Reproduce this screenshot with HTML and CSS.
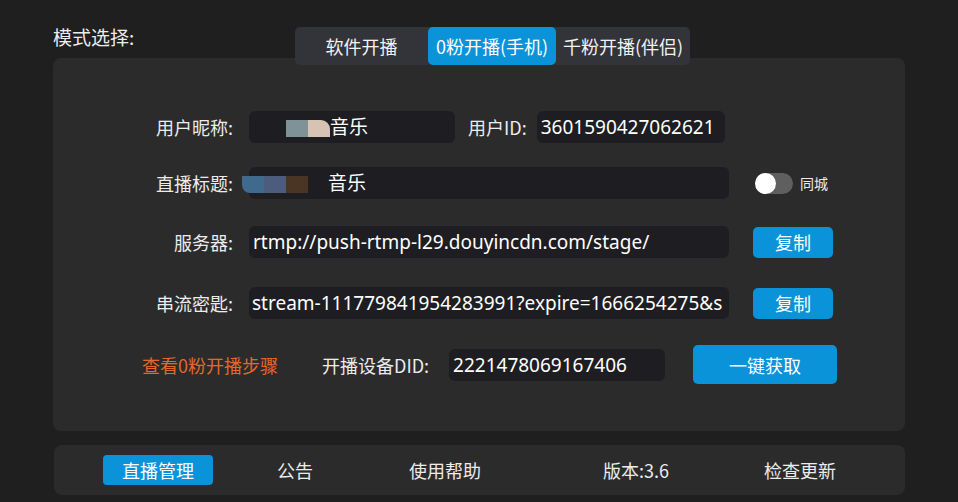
FILE: index.html
```html
<!DOCTYPE html>
<html lang="zh-CN">
<head>
  <meta charset="UTF-8" />
  <title>直播管理</title>
  <link rel="stylesheet" href="styles.css">
</head>
<body>

  <div class="header">
    <div class="header-title">模式选择:</div>
    <div class="mode-tabs">
      <div class="mode-tab tab-soft">软件开播</div>
      <div class="mode-tab tab-phone active">0粉开播(手机)</div>
      <div class="mode-tab tab-mate">千粉开播(伴侣)</div>
    </div>
  </div>

  <div class="panel">
    <div class="row row-nick">
      <div class="label">用户昵称:</div>
      <div class="field field-nick">
        <span class="blur-gap"></span><span class="blur" style="background:#7f9297"></span><span class="blur blur-round" style="background:#d8c2b4"></span>音乐
      </div>
      <div class="label label-id">用户ID:</div>
      <div class="field field-id">3601590427062621</div>
    </div>

    <div class="row row-title">
      <div class="label">直播标题:</div>
      <div class="field field-wide field-title">
        <span class="blur blur-left" style="background:#3f6a8e"></span><span class="blur" style="background:#4b5c7c"></span><span class="blur" style="background:#4a3524"></span><span class="blur-gap small"></span>音乐
      </div>
      <div class="switch"><span class="knob"></span></div>
      <div class="switch-label">同城</div>
    </div>

    <div class="row row-server">
      <div class="label">服务器:</div>
      <div class="field field-wide">rtmp://push-rtmp-l29.douyincdn.com/stage/</div>
      <button class="btn btn-copy">复制</button>
    </div>

    <div class="row row-key">
      <div class="label">串流密匙:</div>
      <div class="field field-wide field-key">stream-111779841954283991?expire=1666254275&amp;s</div>
      <button class="btn btn-copy">复制</button>
    </div>

    <div class="row row-device">
      <a class="steps-link">查看0粉开播步骤</a>
      <div class="device-label">开播设备DID:</div>
      <div class="field field-did">2221478069167406</div>
      <button class="btn btn-fetch">一键获取</button>
    </div>
  </div>

  <div class="nav">
    <div class="nav-item active">直播管理</div>
    <div class="nav-item">公告</div>
    <div class="nav-item">使用帮助</div>
    <div class="nav-item">版本:3.6</div>
    <div class="nav-item">检查更新</div>
  </div>

</body>
</html>
```

FILE: styles.css
```css
body {
  margin: 0;
  padding: 0;
  width: 958px;
  height: 502px;
  overflow: hidden;
  background: #1f1f1f;
  color: #ececec;
  font-family: "Noto Sans CJK SC", "Noto Sans", sans-serif;
  font-size: 18px;
}

.header {
  display: flex;
  height: 31px;
  padding: 27px 0 0 53px;
}

.header-title {
  width: 242px;
  font-size: 19px;
  line-height: 20px;
}

.mode-tabs {
  position: relative;
  z-index: 1;
  display: flex;
  height: 38px;
  background: #333439;
  border-radius: 5px;
}

.mode-tab {
  display: flex;
  align-items: center;
  justify-content: center;
  color: #f2f2f2;
  border-radius: 5px;
}

.tab-soft { width: 133px; }
.tab-phone { width: 128px; }
.tab-mate { width: 134px; }

.mode-tab.active {
  background: #0b93da;
  color: #fff;
}

.panel {
  box-sizing: border-box;
  width: 852px;
  height: 373px;
  margin: 0 0 0 53px;
  padding-top: 53px;
  background: #2b2b2b;
  border-radius: 8px;
}

.row {
  display: flex;
  align-items: center;
  height: 32px;
}

.row-title { margin-top: 24px; }
.row-server { margin-top: 27px; }
.row-key { margin-top: 29px; }

.label {
  width: 180px;
  text-align: right;
  white-space: nowrap;
}

.field {
  box-sizing: border-box;
  height: 32px;
  margin-left: 16px;
  padding-left: 4px;
  background: #1e1e22;
  border-radius: 6px;
  color: #fff;
  font-family: "Noto Sans", "Noto Sans CJK SC", sans-serif;
  font-size: 19px;
  line-height: 32px;
  white-space: nowrap;
  overflow: hidden;
}

.field-nick { width: 206px; }

.label-id {
  width: auto;
  margin-left: 13px;
}

.field-id {
  width: 188px;
  margin-left: 10px;
}

.field-wide { width: 480px; }

.field-title {
  overflow: visible;
}

.field-key {
  padding-left: 3px;
}

.blur {
  display: inline-block;
  width: 22px;
  height: 17px;
  vertical-align: -3px;
}

.blur-round {
  border-top-right-radius: 9px;
}

.blur-left {
  margin-left: -11px;
  border-bottom-left-radius: 8px;
}

.blur-gap {
  display: inline-block;
  width: 33px;
}

.blur-gap.small {
  width: 20px;
}

.switch {
  position: relative;
  width: 38px;
  height: 21px;
  margin-left: 26px;
  background: #5f5f5f;
  border-radius: 11px;
}

.knob {
  position: absolute;
  top: 0;
  left: 0;
  width: 21px;
  height: 21px;
  background: #fff;
  border-radius: 50%;
}

.switch-label {
  margin-left: 7px;
  font-size: 14px;
}

.btn {
  border: none;
  background: #0b93da;
  color: #fff;
  font-family: inherit;
  font-size: 18px;
  border-radius: 5px;
  cursor: pointer;
}

.btn-copy {
  width: 80px;
  height: 31px;
  margin-left: 24px;
}

.row-device {
  height: 39px;
  margin-top: 26px;
}

.steps-link {
  margin-left: 89px;
  color: #e4682c;
  cursor: pointer;
}

.device-label {
  margin-left: 44px;
}

.field-did {
  width: 216px;
  margin-left: 20px;
}

.btn-fetch {
  width: 144px;
  height: 39px;
  margin-left: 28px;
}

.nav {
  box-sizing: border-box;
  display: flex;
  align-items: center;
  width: 851px;
  height: 50px;
  margin: 14px 0 0 54px;
  padding-left: 49px;
  background: #2b2b2b;
  border-radius: 8px;
}

.nav-item {
  width: 110px;
  height: 30px;
  line-height: 30px;
  text-align: center;
  border-radius: 4px;
}

.nav-item:nth-child(2) { margin-left: 27px; }
.nav-item:nth-child(3) { margin-left: 40px; }
.nav-item:nth-child(4) { margin-left: 81px; }
.nav-item:nth-child(5) { margin-left: 54px; }

.nav-item.active {
  background: #0b93da;
  color: #fff;
}
```
